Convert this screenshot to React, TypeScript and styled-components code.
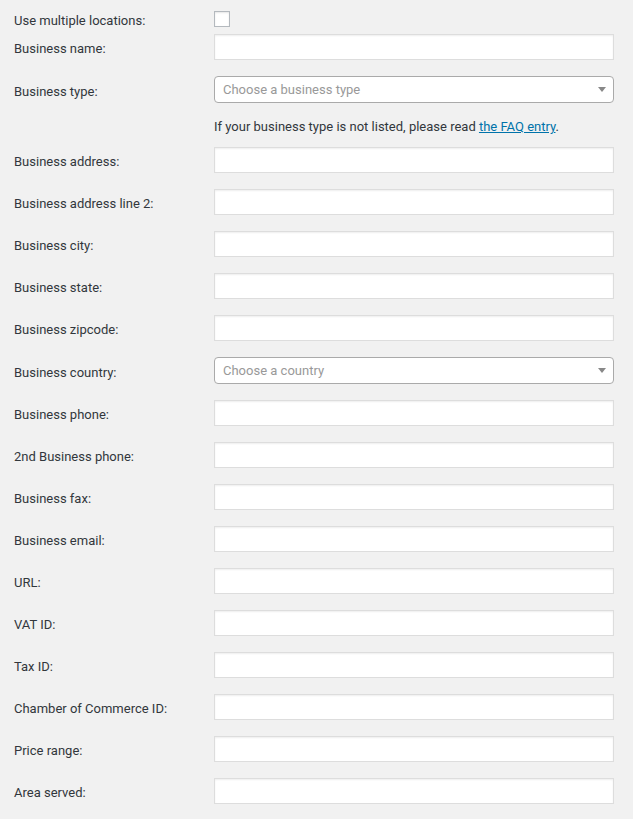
import * as React from "react";
import styled, { createGlobalStyle } from "styled-components";

const GlobalStyle = createGlobalStyle`
  html, body {
    margin: 0;
    padding: 0;
    background: #f1f1f1;
  }
  body {
    font-family: Roboto, "Liberation Sans", Arial, sans-serif;
    font-size: 13px;
    color: #32373c;
  }
`;

interface IField {
    label: string;
    kind?: "text" | "select";
    placeholder?: string;
}

const topFields: IField[] = [
    { label: "Business address:" },
    { label: "Business address line 2:" },
    { label: "Business city:" },
    { label: "Business state:" },
    { label: "Business zipcode:" },
    { label: "Business country:", kind: "select", placeholder: "Choose a country" },
    { label: "Business phone:" },
    { label: "2nd Business phone:" },
    { label: "Business fax:" },
    { label: "Business email:" },
    { label: "URL:" },
    { label: "VAT ID:" },
    { label: "Tax ID:" },
    { label: "Chamber of Commerce ID:" },
    { label: "Price range:" },
    { label: "Area served:" },
];

function FakeSelect(props: { placeholder: string }): JSX.Element {
    return (
        <Select>
            <Placeholder>{ props.placeholder }</Placeholder>
            <Arrow />
        </Select>
    );
}

function FieldRow(props: { field: IField }): JSX.Element {
    const { field } = props;
    return (
        <Row>
            <Label>{ field.label }</Label>
            { field.kind === "select"
                ? <FakeSelect placeholder={ field.placeholder || "" } />
                : <Input type="text" /> }
        </Row>
    );
}

export default function App(): JSX.Element {
    return (
        <>
            <GlobalStyle />
            <Form>
                <Row $gap={ 7 }>
                    <Label>Use multiple locations:</Label>
                    <Checkbox />
                </Row>
                <Row>
                    <Label>Business name:</Label>
                    <Input type="text" />
                </Row>
                <Row $gap={ 0 }>
                    <Label>Business type:</Label>
                    <FakeSelect placeholder="Choose a business type" />
                </Row>
                <Help>
                    If your business type is not listed, please read <a href="#">the FAQ entry</a>.
                </Help>
                { topFields.map(field => (
                    <FieldRow key={ field.label } field={ field } />
                )) }
            </Form>
        </>
    );
}

const Form = styled.div`
  display: flex;
  flex-direction: column;
  padding: 11px 19px 15px 14px;
`;

const Row = styled.div<{ $gap?: number }>`
  display: flex;
  align-items: center;
  margin-bottom: ${ p => (p.$gap ?? 16) }px;
`;

/* nudges the text 2px down without making the row taller */
const Label = styled.label`
  width: 200px;
  flex-shrink: 0;
  line-height: 16px;
  padding-top: 2px;
  margin-bottom: -2px;
`;

const Checkbox = styled.span`
  display: block;
  width: 16px;
  height: 16px;
  box-sizing: border-box;
  border: 1px solid #b4b9be;
  background: #fff;
  box-shadow: inset 0 1px 2px rgba(0, 0, 0, 0.1);
`;

const Input = styled.input`
  flex: 1;
  height: 26px;
  box-sizing: border-box;
  margin: 0;
  padding: 3px 5px;
  border: 1px solid #ddd;
  background: #fff;
  box-shadow: inset 0 1px 2px rgba(0, 0, 0, 0.07);
  font: inherit;
  outline: none;
`;

const Select = styled.div`
  flex: 1;
  height: 27px;
  box-sizing: border-box;
  display: flex;
  align-items: center;
  justify-content: space-between;
  padding: 0 7px 0 8px;
  border: 1px solid #aaa;
  border-radius: 4px;
  background: #fff;
`;

const Placeholder = styled.span`
  color: #999;
  font-size: 13px;
`;

const Arrow = styled.span`
  width: 0;
  height: 0;
  border-left: 4px solid transparent;
  border-right: 4px solid transparent;
  border-top: 5px solid #888;
`;

const Help = styled.p`
  margin: 14px 0 10px 200px;
  line-height: 20px;

  a {
    color: #0073aa;
    text-decoration: underline;
  }
`;
